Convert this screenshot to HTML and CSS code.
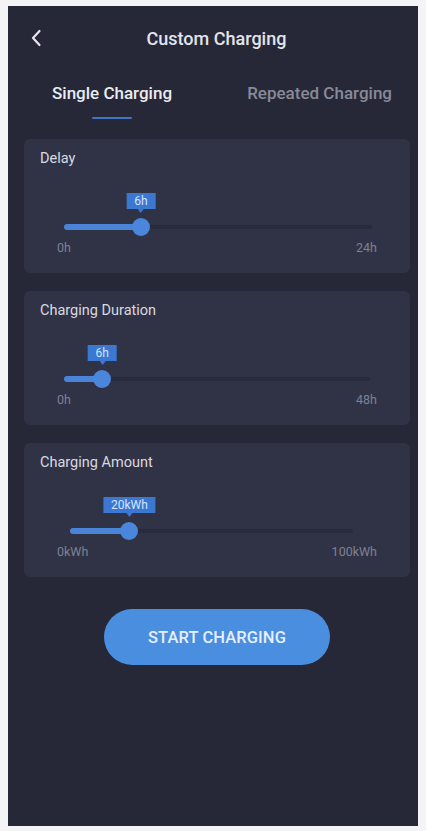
FILE: index.html
```html
<!DOCTYPE html>
<html>
<head>
<meta charset="utf-8">
<link rel="stylesheet" href="styles.css">
</head>
<body>
<div class="screen">
  <header class="topbar">
    <svg class="back" width="12" height="18" viewBox="0 0 12 18"><path d="M9.5 2 L3 9 L9.5 16" fill="none" stroke="#e6e6ee" stroke-width="2.2" stroke-linecap="round" stroke-linejoin="round"/></svg>
    <h1 class="title">Custom Charging</h1>
  </header>
  <nav class="tabs">
    <div class="tab active">Single Charging</div>
    <div class="tab">Repeated Charging</div>
  </nav>
  <section class="card">
    <div class="label">Delay</div>
    <div class="slider s1">
      <div class="track">
        <div class="fill" style="width:25%">
          <span class="tip">6h</span>
          <span class="thumb"></span>
        </div>
      </div>
      <div class="ends"><span>0h</span><span>24h</span></div>
    </div>
  </section>
  <section class="card">
    <div class="label">Charging Duration</div>
    <div class="slider s2">
      <div class="track">
        <div class="fill" style="width:12.5%">
          <span class="tip">6h</span>
          <span class="thumb"></span>
        </div>
      </div>
      <div class="ends"><span>0h</span><span>48h</span></div>
    </div>
  </section>
  <section class="card">
    <div class="label">Charging Amount</div>
    <div class="slider s3">
      <div class="track">
        <div class="fill" style="width:21%">
          <span class="tip">20kWh</span>
          <span class="thumb"></span>
        </div>
      </div>
      <div class="ends"><span>0kWh</span><span>100kWh</span></div>
    </div>
  </section>
  <div class="actions">
    <button class="start">START CHARGING</button>
  </div>
</div>
</body>
</html>
```
FILE: styles.css
```css
html, body {
  margin: 0;
  padding: 0;
  background: #f4f4f6;
}
body {
  font-family: Roboto, "Noto Sans", "Liberation Sans", sans-serif;
  padding: 6px 8px 5px 8px;
}
.screen {
  width: 410px;
  height: 820px;
  background: #262837;
  display: flex;
  flex-direction: column;
  box-sizing: border-box;
  padding: 0 8px 0 16px;
}
.topbar {
  height: 64px;
  display: flex;
  align-items: center;
  justify-content: center;
  position: relative;
  margin-left: -16px;
  margin-right: -8px;
}
.back {
  position: absolute;
  left: 22px;
  top: 23px;
}
.title {
  margin: 0;
  font-size: 18px;
  font-weight: 500;
  color: #e4e4ec;
  margin-left: 7px;
}
.tabs {
  display: flex;
  height: 69px;
  margin-left: -16px;
  margin-right: -8px;
}
.tab {
  font-size: 17px;
  font-weight: 500;
  color: #878a99;
  padding-top: 13px;
}
.tab:first-child {
  margin-left: 44px;
  position: relative;
  color: #ebebf2;
}
.tab:last-child {
  margin-left: auto;
  margin-right: 26px;
}
.tab.active::after {
  content: "";
  position: absolute;
  left: 40px;
  top: 47px;
  width: 40px;
  height: 2px;
  background: #3f74c4;
  border-radius: 1px;
}
.card {
  background: #303345;
  border-radius: 6px;
  height: 134px;
  margin-bottom: 18px;
  box-sizing: border-box;
  padding: 11px 0 0 16px;
  position: relative;
}
.label {
  font-size: 14.5px;
  color: #d9d9e2;
  height: 17px;
  line-height: 17px;
}
.slider {
  margin-top: 58px;
  padding-right: 33px;
  padding-left: 17px;
}
.track {
  height: 4px;
  background: #292b3c;
  border-radius: 2px;
  margin: 0 5px 0 7px;
  position: relative;
}
.s2 .track { margin: 0 7px 0 7px; }
.s3 .track { margin: 0 24px 0 13px; }
.fill {
  position: absolute;
  left: 0;
  top: -1px;
  height: 6px;
  background: #4a84d8;
  border-radius: 3px;
}
.thumb {
  position: absolute;
  right: -9px;
  top: -6px;
  width: 18px;
  height: 18px;
  border-radius: 50%;
  background: #4a86dc;
}
.tip {
  position: absolute;
  right: 0;
  transform: translateX(50%);
  bottom: 21px;
  background: #3b78d2;
  color: #d6e4ff;
  font-size: 12px;
  line-height: 16px;
  height: 16px;
  padding: 0 8px;
  white-space: nowrap;
}
.tip::after {
  content: "";
  position: absolute;
  left: 50%;
  bottom: -4px;
  margin-left: -3px;
  border-left: 3px solid transparent;
  border-right: 3px solid transparent;
  border-top: 4px solid #3b78d2;
}
.ends {
  display: flex;
  justify-content: space-between;
  font-size: 12.5px;
  color: #7e8194;
  margin-top: 11px;
}
.actions {
  display: flex;
  justify-content: center;
  margin-top: 14px;
}
.start {
  width: 226px;
  height: 56px;
  border: none;
  border-radius: 28px;
  background: #4a8ee0;
  color: #e6efff;
  font-family: Roboto, "Noto Sans", "Liberation Sans", sans-serif;
  font-size: 16.5px;
  font-weight: 500;
  letter-spacing: 0.1px;
}
```
